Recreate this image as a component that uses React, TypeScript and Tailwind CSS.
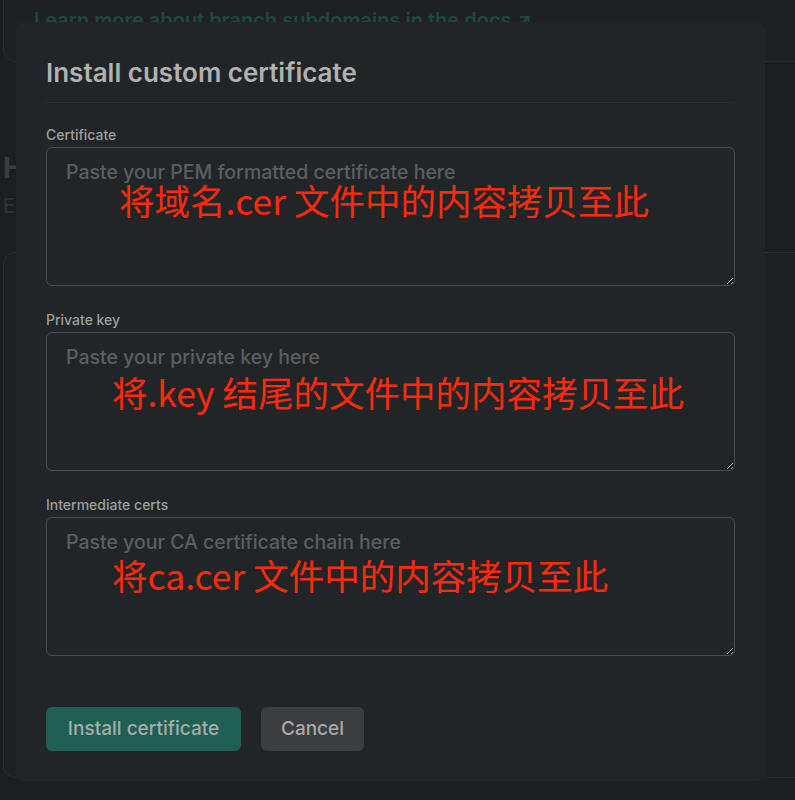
const fields = [
  {
    label: 'Certificate',
    placeholder: 'Paste your PEM formatted certificate here',
    note: '将域名.cer 文件中的内容拷贝至此',
    noteClass: 'left-[73px] top-[35px]',
  },
  {
    label: 'Private key',
    placeholder: 'Paste your private key here',
    note: '将.key 结尾的文件中的内容拷贝至此',
    noteClass: 'left-[66px] top-[42px]',
  },
  {
    label: 'Intermediate certs',
    placeholder: 'Paste your CA certificate chain here',
    note: '将ca.cer 文件中的内容拷贝至此',
    noteClass: 'left-[66px] top-[40px]',
  },
];

export default function App() {
  return (
    <div className="relative h-[800px] w-[795px] overflow-hidden bg-[#1b1f21] font-['Inter','Noto_Sans','Noto_Sans_CJK_SC',sans-serif]">
      {/* page behind the dialog (dimmed) */}
      <div className="pl-[3px]">
        <div className="-mt-[40px] h-[102px] w-[900px] rounded-xl border border-[#2a2e31] bg-[#1d2123] pl-[30px] pt-[44px]">
          <span className="text-[20px] font-semibold text-[#1e4744]">
            Learn more about branch subdomains in the docs ↗
          </span>
        </div>
        <h2 className="mt-[90px] text-[28px] font-bold leading-8 text-[#393c3f]">HTTPS</h2>
        <p className="mt-[8px] text-[20px] leading-7 text-[#2f3336]">Enable HTTPS on your custom domains</p>
        <div className="mt-[32px] h-[526px] w-[900px] rounded-xl border border-[#2a2e31] bg-[#1d2123]" />
      </div>

      {/* dialog */}
      <div className="absolute left-[16px] top-[22px] w-[749px] rounded-lg bg-[#222527] px-[30px] pb-[30px] pt-[35px]">
        <h1 className="text-[26px] font-semibold leading-8 text-[#b1b1b1]">Install custom certificate</h1>
        <div className="mt-[13px] h-px bg-[#2b2f31]" />

        <div className="mt-6 flex flex-col gap-[26px]">
          {fields.map((f) => (
            <div key={f.label} className="flex flex-col gap-1">
              <label className="text-[14px] font-medium leading-4 text-[#9e9e9e]">{f.label}</label>
              <div className="relative">
                <textarea
                  placeholder={f.placeholder}
                  className="block h-[139px] w-full rounded-md border border-[#4a4d50] bg-[#222527] px-[19px] py-3 text-[19.5px] font-medium leading-6 text-[#c8c8c8] outline-none [color-scheme:dark] placeholder:text-[#5c5e60]"
                />
                <span
                  className={`pointer-events-none absolute whitespace-nowrap font-['Noto_Sans_CJK_SC',sans-serif] text-[35.5px] leading-none text-[#ff2a0c] ${f.noteClass}`}
                >
                  {f.note}
                </span>
              </div>
            </div>
          ))}
        </div>

        <div className="mt-[51px] flex gap-5">
          <button className="h-[44px] w-[195px] rounded-md bg-[#1f6055] text-[19px] font-medium text-[#a6aca8]">
            Install certificate
          </button>
          <button className="h-[44px] w-[103px] rounded-md bg-[#3c3d3f] text-[19px] font-medium text-[#a9a9a9]">
            Cancel
          </button>
        </div>
      </div>
    </div>
  );
}
